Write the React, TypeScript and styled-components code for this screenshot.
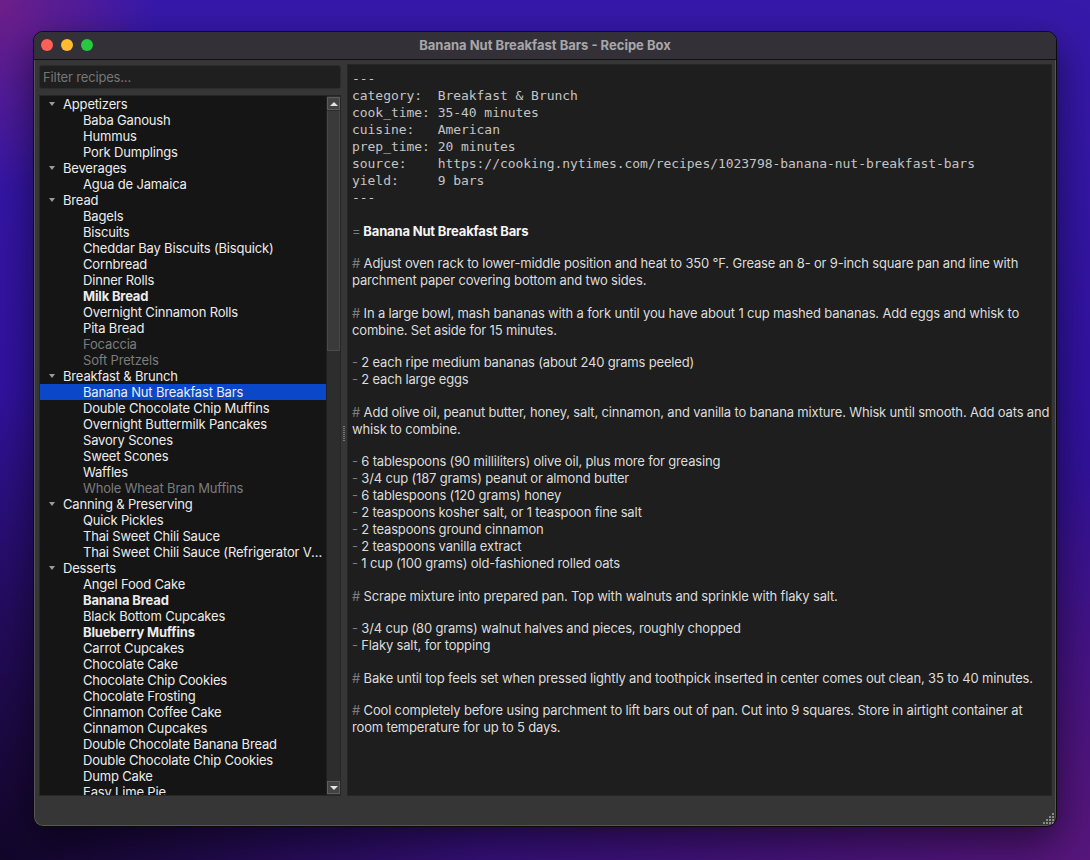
import React from "react";
import styled, { createGlobalStyle } from "styled-components";

type ItemState = "normal" | "bold" | "dim";
type Recipe = { name: string; state?: ItemState };
type Category = { name: string; recipes: Recipe[] };

const TREE: Category[] = [
  {
    name: "Appetizers",
    recipes: [{ name: "Baba Ganoush" }, { name: "Hummus" }, { name: "Pork Dumplings" }],
  },
  { name: "Beverages", recipes: [{ name: "Agua de Jamaica" }] },
  {
    name: "Bread",
    recipes: [
      { name: "Bagels" },
      { name: "Biscuits" },
      { name: "Cheddar Bay Biscuits (Bisquick)" },
      { name: "Cornbread" },
      { name: "Dinner Rolls" },
      { name: "Milk Bread", state: "bold" },
      { name: "Overnight Cinnamon Rolls" },
      { name: "Pita Bread" },
      { name: "Focaccia", state: "dim" },
      { name: "Soft Pretzels", state: "dim" },
    ],
  },
  {
    name: "Breakfast & Brunch",
    recipes: [
      { name: "Banana Nut Breakfast Bars" },
      { name: "Double Chocolate Chip Muffins" },
      { name: "Overnight Buttermilk Pancakes" },
      { name: "Savory Scones" },
      { name: "Sweet Scones" },
      { name: "Waffles" },
      { name: "Whole Wheat Bran Muffins", state: "dim" },
    ],
  },
  {
    name: "Canning & Preserving",
    recipes: [
      { name: "Quick Pickles" },
      { name: "Thai Sweet Chili Sauce" },
      { name: "Thai Sweet Chili Sauce (Refrigerator Version)" },
    ],
  },
  {
    name: "Desserts",
    recipes: [
      { name: "Angel Food Cake" },
      { name: "Banana Bread", state: "bold" },
      { name: "Black Bottom Cupcakes" },
      { name: "Blueberry Muffins", state: "bold" },
      { name: "Carrot Cupcakes" },
      { name: "Chocolate Cake" },
      { name: "Chocolate Chip Cookies" },
      { name: "Chocolate Frosting" },
      { name: "Cinnamon Coffee Cake" },
      { name: "Cinnamon Cupcakes" },
      { name: "Double Chocolate Banana Bread" },
      { name: "Double Chocolate Chip Cookies" },
      { name: "Dump Cake" },
      { name: "Easy Lime Pie" },
      { name: "Flourless Chocolate Cake" },
    ],
  },
];

const SELECTED = "Banana Nut Breakfast Bars";

const FRONT_MATTER = [
  "---",
  "category:  Breakfast & Brunch",
  "cook_time: 35-40 minutes",
  "cuisine:   American",
  "prep_time: 20 minutes",
  "source:    https://cooking.nytimes.com/recipes/1023798-banana-nut-breakfast-bars",
  "yield:     9 bars",
  "---",
];

// each block is a paragraph; lines are kept as they wrap in the editor
type Block = { marker: "#" | "-"; lines: string[] }[];

const BODY: Block[] = [
  [
    {
      marker: "#",
      lines: [
        "Adjust oven rack to lower-middle position and heat to 350 °F. Grease an 8- or 9-inch square pan and line with",
        "parchment paper covering bottom and two sides.",
      ],
    },
  ],
  [
    {
      marker: "#",
      lines: [
        "In a large bowl, mash bananas with a fork until you have about 1 cup mashed bananas. Add eggs and whisk to",
        "combine. Set aside for 15 minutes.",
      ],
    },
  ],
  [
    { marker: "-", lines: ["2 each ripe medium bananas (about 240 grams peeled)"] },
    { marker: "-", lines: ["2 each large eggs"] },
  ],
  [
    {
      marker: "#",
      lines: [
        "Add olive oil, peanut butter, honey, salt, cinnamon, and vanilla to banana mixture. Whisk until smooth. Add oats and",
        "whisk to combine.",
      ],
    },
  ],
  [
    { marker: "-", lines: ["6 tablespoons (90 milliliters) olive oil, plus more for greasing"] },
    { marker: "-", lines: ["3/4 cup (187 grams) peanut or almond butter"] },
    { marker: "-", lines: ["6 tablespoons (120 grams) honey"] },
    { marker: "-", lines: ["2 teaspoons kosher salt, or 1 teaspoon fine salt"] },
    { marker: "-", lines: ["2 teaspoons ground cinnamon"] },
    { marker: "-", lines: ["2 teaspoons vanilla extract"] },
    { marker: "-", lines: ["1 cup (100 grams) old-fashioned rolled oats"] },
  ],
  [{ marker: "#", lines: ["Scrape mixture into prepared pan. Top with walnuts and sprinkle with flaky salt."] }],
  [
    { marker: "-", lines: ["3/4 cup (80 grams) walnut halves and pieces, roughly chopped"] },
    { marker: "-", lines: ["Flaky salt, for topping"] },
  ],
  [
    {
      marker: "#",
      lines: [
        "Bake until top feels set when pressed lightly and toothpick inserted in center comes out clean, 35 to 40 minutes.",
      ],
    },
  ],
  [
    {
      marker: "#",
      lines: [
        "Cool completely before using parchment to lift bars out of pan. Cut into 9 squares. Store in airtight container at",
        "room temperature for up to 5 days.",
      ],
    },
  ],
];

const UI_FONT = `Inter, "Noto Sans", "Liberation Sans", sans-serif`;
const MONO_FONT = `"DejaVu Sans Mono", "Liberation Mono", monospace`;

const GlobalStyle = createGlobalStyle`
  html, body {
    margin: 0;
    padding: 0;
  }
  body {
    width: 1090px;
    height: 860px;
    overflow: hidden;
    font-family: ${UI_FONT};
    letter-spacing: -0.17px;
    background-color: #2f1190;
    background-image:
      radial-gradient(55% 45% at 100% 100%, #57167c 0%, rgba(87, 22, 124, 0) 100%),
      radial-gradient(45% 55% at 0% 100%, #12062a 0%, rgba(18, 6, 42, 0) 100%),
      radial-gradient(14% 22% at 0% 0%, #6e1f88 0%, rgba(110, 31, 136, 0) 100%),
      linear-gradient(180deg, #3719aa 0%, #3112a0 45%, #36107a 100%);
  }
`;

const Desktop = styled.div`
  width: 1090px;
  height: 860px;
  box-sizing: border-box;
  padding: 31px 0 0 33px;
`;

const Window = styled.div`
  width: 1024px;
  height: 796px;
  box-sizing: border-box;
  display: flex;
  flex-direction: column;
  border: 1px solid #0a0a0a;
  border-radius: 10px;
  overflow: hidden;
  background: #363636;
  box-shadow: 0 14px 40px rgba(0, 0, 0, 0.55), inset 0 0 0 1px rgba(255, 255, 255, 0.16);
`;

const TitleBar = styled.div`
  height: 28px;
  flex: none;
  box-sizing: border-box;
  display: grid;
  grid-template-columns: 1fr auto 1fr;
  align-items: center;
  background: #333137;
  border-bottom: 1px solid #111;
  padding: 0 7px 2px 7px;
`;

const Lights = styled.div`
  display: flex;
  gap: 8px;
`;

const Light = styled.span<{ $color: string }>`
  width: 12px;
  height: 12px;
  border-radius: 50%;
  background: ${(p) => p.$color};
`;

const Title = styled.div`
  font-size: 13px;
  font-weight: 700;
  letter-spacing: 0;
  color: #a7a6aa;
`;

const Content = styled.div`
  flex: 1;
  min-height: 0;
  display: flex;
  padding: 4px 4px 0 5px;
`;

const LeftPane = styled.div`
  width: 302px;
  flex: none;
  display: flex;
  flex-direction: column;
  gap: 6px;
`;

const Filter = styled.input`
  margin-top: 1px;
  height: 24px;
  box-sizing: border-box;
  border: 1px solid #2c2c2c;
  border-radius: 3px;
  background: #1f1f1f;
  color: #ddd;
  font-family: ${UI_FONT};
  font-size: 13px;
  letter-spacing: -0.17px;
  padding: 0 3px;
  outline: none;

  &::placeholder {
    color: #767676;
  }
`;

const Tree = styled.div`
  flex: 1;
  min-height: 0;
  display: flex;
  border: 1px solid #262626;
  background: #151515;
`;

const TreeList = styled.div`
  flex: 1;
  min-width: 0;
  overflow: hidden;
`;

const Row = styled.div<{ $selected?: boolean }>`
  height: 16px;
  display: flex;
  align-items: center;
  background: ${(p) => (p.$selected ? "#0b47c9" : "transparent")};
`;

const Disclosure = styled.span`
  width: 23px;
  flex: none;
  display: flex;
  justify-content: center;
  padding-left: 1px;
  box-sizing: border-box;

  &::before {
    content: "";
    border-left: 3.5px solid transparent;
    border-right: 3.5px solid transparent;
    border-top: 4px solid #9a9a9a;
  }
`;

const Label = styled.span<{ $state?: ItemState; $indent?: boolean }>`
  font-size: 13px;
  line-height: 16px;
  padding-left: ${(p) => (p.$indent ? "43px" : "0")};
  padding-right: 2px;
  white-space: nowrap;
  overflow: hidden;
  text-overflow: ellipsis;
  font-weight: ${(p) => (p.$state === "bold" ? 700 : 400)};
  color: ${(p) => (p.$state === "dim" ? "#7c7c7c" : "#ececec")};
`;

const Scrollbar = styled.div`
  width: 14px;
  flex: none;
  display: flex;
  flex-direction: column;
  background: #2d2d2d;
  border-left: 1px solid #202020;
  box-sizing: border-box;
`;

const ArrowButton = styled.div<{ $down?: boolean }>`
  height: 13px;
  margin: 1px 0 1px 0;
  box-sizing: border-box;
  border: 1px solid #5c5c5c;
  background: #434343;
  display: flex;
  align-items: center;
  justify-content: center;

  &::before {
    content: "";
    border-left: 4px solid transparent;
    border-right: 4px solid transparent;
    ${(p) => (p.$down ? "border-top: 4px solid #e4e4e4;" : "border-bottom: 4px solid #e4e4e4;")}
  }
`;

const Thumb = styled.div`
  height: 240px;
  flex: none;
  box-sizing: border-box;
  background: #3a3a3a;
  border-left: 1px solid #484848;
  border-right: 1px solid #484848;
  border-bottom: 1px solid #4c4c4c;
`;

const Track = styled.div`
  flex: 1;
`;

const Splitter = styled.div`
  width: 6px;
  flex: none;
  display: flex;
  align-items: center;
  justify-content: center;
`;

const Grip = styled.div`
  width: 2px;
  height: 16px;
  margin-top: 8px;
  background-image: linear-gradient(#7a7a7a 50%, transparent 50%);
  background-size: 2px 2px;
`;

const Editor = styled.div`
  flex: 1;
  min-width: 0;
  box-sizing: border-box;
  border: 1px solid #262626;
  background: #1e1e1e;
  padding: 5px 4px 4px 4px;
  overflow: hidden;
`;

const MonoLine = styled.div`
  font-family: ${MONO_FONT};
  font-size: 13px;
  letter-spacing: -0.04px;
  line-height: 17px;
  height: 17px;
  white-space: pre;
  color: #c4c4c4;
`;

const Heading = styled.div`
  font-size: 13px;
  line-height: 18px;
  font-weight: 700;
  color: #f4f4f4;
  white-space: pre;
`;

const Paragraph = styled.div`
  margin-top: 15.5px;
`;

const TextLine = styled.div`
  font-size: 13px;
  line-height: 17px;
  height: 17px;
  white-space: pre;
  color: #dcdcdc;
`;

const Marker = styled.span`
  color: #7d7d7d;
  font-weight: 400;
`;

const StatusBar = styled.div`
  height: 28px;
  flex: none;
  display: flex;
  align-items: flex-end;
  justify-content: flex-end;
  padding: 0 2px 2px 0;
`;

const ResizeGrip = () => (
  <svg width="11" height="11" viewBox="0 0 11 11">
    {[
      [9, 1],
      [9, 4],
      [6, 4],
      [9, 7],
      [6, 7],
      [3, 7],
      [9, 10],
      [6, 10],
      [3, 10],
      [0, 10],
    ].map(([x, y]) => (
      <rect key={`${x}-${y}`} x={x} y={y - 1} width="2" height="2" fill="#8a8a8a" />
    ))}
  </svg>
);

const App = () => {
  return (
    <>
      <GlobalStyle />
      <Desktop>
        <Window>
          <TitleBar>
            <Lights>
              <Light $color="#ff5f57" />
              <Light $color="#febc2e" />
              <Light $color="#28c840" />
            </Lights>
            <Title>Banana Nut Breakfast Bars - Recipe Box</Title>
            <span />
          </TitleBar>

          <Content>
            <LeftPane>
              <Filter placeholder="Filter recipes..." />
              <Tree>
                <TreeList>
                  {TREE.map((cat) => (
                    <React.Fragment key={cat.name}>
                      <Row>
                        <Disclosure />
                        <Label>{cat.name}</Label>
                      </Row>
                      {cat.recipes.map((r) => (
                        <Row key={r.name} $selected={r.name === SELECTED}>
                          <Label $indent $state={r.state}>
                            {r.name}
                          </Label>
                        </Row>
                      ))}
                    </React.Fragment>
                  ))}
                </TreeList>
                <Scrollbar>
                  <ArrowButton />
                  <Thumb />
                  <Track />
                  <ArrowButton $down />
                </Scrollbar>
              </Tree>
            </LeftPane>

            <Splitter>
              <Grip />
            </Splitter>

            <Editor>
              {FRONT_MATTER.map((line, i) => (
                <MonoLine key={i}>{line}</MonoLine>
              ))}
              <Paragraph>
                <Heading>
                  <Marker>=</Marker> Banana Nut Breakfast Bars
                </Heading>
              </Paragraph>
              {BODY.map((block, i) => (
                <Paragraph key={i}>
                  {block.map((item, j) =>
                    item.lines.map((line, k) => (
                      <TextLine key={`${j}-${k}`}>
                        {k === 0 ? (
                          <>
                            <Marker>{item.marker}</Marker> {line}
                          </>
                        ) : (
                          line
                        )}
                      </TextLine>
                    ))
                  )}
                </Paragraph>
              ))}
            </Editor>
          </Content>

          <StatusBar>
            <ResizeGrip />
          </StatusBar>
        </Window>
      </Desktop>
    </>
  );
};

export default App;
